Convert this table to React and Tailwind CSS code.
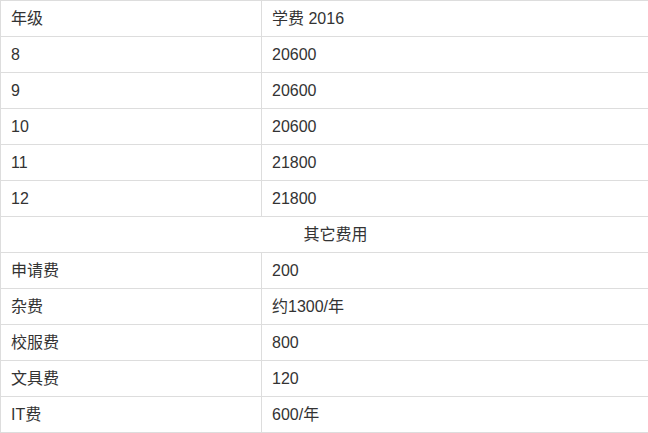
import React from 'react';

const top = [
  ['年级', '学费 2016'],
  ['8', '20600'],
  ['9', '20600'],
  ['10', '20600'],
  ['11', '21800'],
  ['12', '21800'],
];

const other = [
  ['申请费', '200'],
  ['杂费', '约1300/年'],
  ['校服费', '800'],
  ['文具费', '120'],
  ['IT费', '600/年'],
];

const cell = 'border border-[#dddddd] h-[36px] px-[10px] py-0 align-middle';

export default function App() {
  return (
    <div
      className="bg-white w-[648px] h-[433px] overflow-hidden text-[16px] text-[#333333]"
      style={{ fontFamily: '"Liberation Sans", "Noto Sans CJK SC", sans-serif' }}
    >
      <table className="border-collapse w-[671px] table-fixed">
        <colgroup>
          <col className="w-[261px]" />
          <col />
        </colgroup>
        <tbody>
          {top.map(([a, b]) => (
            <tr key={a}>
              <td className={cell}>{a}</td>
              <td className={cell}>{b}</td>
            </tr>
          ))}
          <tr>
            <td colSpan={2} className={cell + ' text-center'}>
              其它费用
            </td>
          </tr>
          {other.map(([a, b]) => (
            <tr key={a}>
              <td className={cell}>{a}</td>
              <td className={cell}>{b}</td>
            </tr>
          ))}
        </tbody>
      </table>
    </div>
  );
}
